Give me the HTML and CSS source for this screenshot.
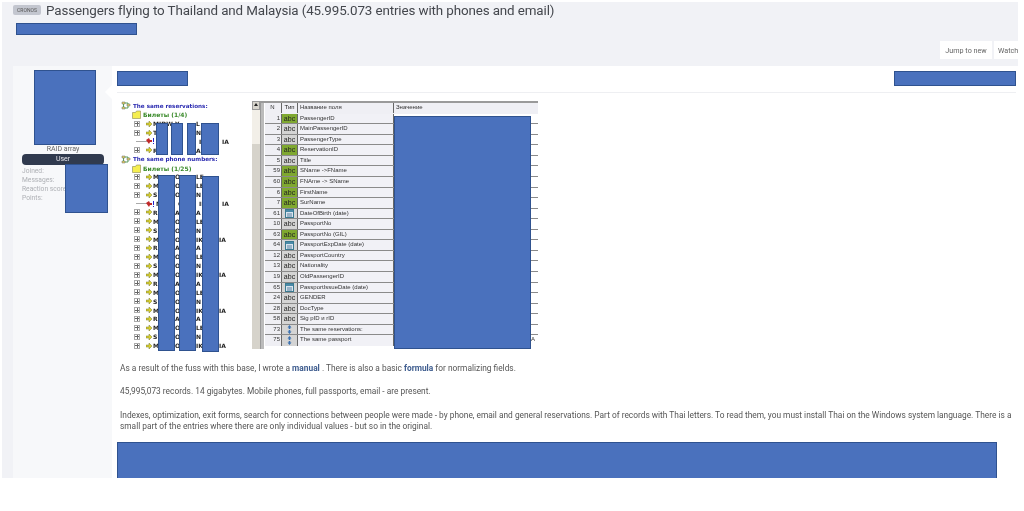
FILE: index.html
```html
<!DOCTYPE html>
<html lang="en">
<head>
<meta charset="utf-8">
<title>Passengers flying to Thailand and Malaysia</title>
<link rel="stylesheet" href="styles.css">
</head>
<body>
<svg class="defs" width="0" height="0" aria-hidden="true">
  <symbol id="i-tree" viewBox="0 0 10 9"><path d="M1 1h3v2H1zM6 3h3v2H6zM1 6h3v2H1z" fill="#e8d860" stroke="#667" stroke-width=".5"/><path d="M2.500 3v3M4 2h3v1M4 7h3V5" fill="none" stroke="#3a8a3a" stroke-width=".8"/></symbol>
  <symbol id="i-folder" viewBox="0 0 9 9"><path d="M.5 2.500h3l1-1.500h4v7.500h-8z" fill="#f5ee50" stroke="#8a8a50" stroke-width=".6"/></symbol>
  <symbol id="i-arrow" viewBox="0 0 6 6"><path d="M0 2h3V0l3 3-3 3V4H0z" fill="#d8d030" stroke="#7a7a30" stroke-width=".5"/></symbol>
  <symbol id="i-warn" viewBox="0 0 9 6"><path d="M0 2l3-2 1 2h2v2H4L3 6z" fill="#c02828"/><path d="M7.500 0v4M7.500 5v1" stroke="#2222cc" stroke-width="1"/></symbol>
  <symbol id="i-cal" viewBox="0 0 9 9"><rect x=".5" y=".5" width="8" height="8" fill="#d8e4ee" stroke="#3a7a90"/><rect x="1" y="1" width="7" height="2" fill="#4a8aa8"/><path d="M2 5h5M2 7h5" stroke="#5a80a0"/></symbol>
  <symbol id="i-link" viewBox="0 0 9 9"><path d="M4.500 0l2 2.500H5.300v1.500H3.700V2.500H2.500zM4.500 9l-2-2.500h1.200V5h1.600v1.500h1.200z" fill="#3a70b0"/></symbol>
</svg>
<div class="page">
  <header class="thread-head">
    <h1 class="title"><span class="prefix">CRONOS</span>Passengers flying to Thailand and Malaysia (45.995.073 entries with phones and email)</h1>
    <div class="redact author-bar"></div>
  </header>
  <nav class="actions">
    <a class="btn">Jump to new</a>
    <a class="btn btn-cut">Watch</a>
  </nav>
  <article class="post">
    <aside class="user">
      <div class="redact avatar"></div>
      <div class="user-name">RAID array</div>
      <div class="user-badge">User</div>
      <dl class="user-stats">
        <dt>Joined:</dt>
        <dt>Messages:</dt>
        <dt>Reaction score:</dt>
        <dt>Points:</dt>
      </dl>
      <div class="redact stats-cover"></div>
    </aside>
    <div class="body">
      <div class="notch"></div>
      <div class="post-head">
        <div class="redact date"></div>
        <div class="redact post-no"></div>
      </div>
      <div class="shot">
        <div class="tree">
          <div class="node head"><svg class="ic-tree"><use href="#i-tree"/></svg>The same reservations:</div>
          <div class="node sub"><svg class="ic-folder"><use href="#i-folder"/></svg>Билеты (1/4)</div>
          <div class="node leaf"><i class="exp"></i><svg class="ic-arrow"><use href="#i-arrow"/></svg><b>MIDW</b><b>Y</b><b>L</b><b></b></div>
          <div class="node leaf"><i class="exp"></i><svg class="ic-arrow"><use href="#i-arrow"/></svg><b>T</b><b>I</b><b>N</b><b></b></div>
          <div class="node leaf warn"><i class="dash"></i><svg class="ic-warn"><use href="#i-warn"/></svg><b>M</b><b>Y</b><b>IK</b><b>IA</b></div>
          <div class="node leaf"><i class="exp"></i><svg class="ic-arrow"><use href="#i-arrow"/></svg><b>R</b><b>A</b><b>A</b><b></b></div>
          <div class="node head"><svg class="ic-tree"><use href="#i-tree"/></svg>The same phone numbers:</div>
          <div class="node sub"><svg class="ic-folder"><use href="#i-folder"/></svg>Билеты (1/25)</div>
          <div class="node leaf"><i class="exp"></i><svg class="ic-arrow"><use href="#i-arrow"/></svg><b>M</b><b>O</b><b>LE</b><b></b></div>
          <div class="node leaf"><i class="exp"></i><svg class="ic-arrow"><use href="#i-arrow"/></svg><b>M</b><b>O</b><b>LE</b><b></b></div>
          <div class="node leaf"><i class="exp"></i><svg class="ic-arrow"><use href="#i-arrow"/></svg><b>S</b><b>O</b><b>N</b><b></b></div>
          <div class="node leaf warn"><i class="dash"></i><svg class="ic-warn"><use href="#i-warn"/></svg><b>M</b><b>O</b><b>IK</b><b>IA</b></div>
          <div class="node leaf"><i class="exp"></i><svg class="ic-arrow"><use href="#i-arrow"/></svg><b>R</b><b>A</b><b>A</b><b></b></div>
          <div class="node leaf"><i class="exp"></i><svg class="ic-arrow"><use href="#i-arrow"/></svg><b>M</b><b>O</b><b>LE</b><b></b></div>
          <div class="node leaf"><i class="exp"></i><svg class="ic-arrow"><use href="#i-arrow"/></svg><b>S</b><b>O</b><b>N</b><b></b></div>
          <div class="node leaf"><i class="exp"></i><svg class="ic-arrow"><use href="#i-arrow"/></svg><b>M</b><b>O</b><b>IK</b><b>IA</b></div>
          <div class="node leaf"><i class="exp"></i><svg class="ic-arrow"><use href="#i-arrow"/></svg><b>R</b><b>A</b><b>A</b><b></b></div>
          <div class="node leaf"><i class="exp"></i><svg class="ic-arrow"><use href="#i-arrow"/></svg><b>M</b><b>O</b><b>LE</b><b></b></div>
          <div class="node leaf"><i class="exp"></i><svg class="ic-arrow"><use href="#i-arrow"/></svg><b>S</b><b>O</b><b>N</b><b></b></div>
          <div class="node leaf"><i class="exp"></i><svg class="ic-arrow"><use href="#i-arrow"/></svg><b>M</b><b>O</b><b>IK</b><b>IA</b></div>
          <div class="node leaf"><i class="exp"></i><svg class="ic-arrow"><use href="#i-arrow"/></svg><b>R</b><b>A</b><b>A</b><b></b></div>
          <div class="node leaf"><i class="exp"></i><svg class="ic-arrow"><use href="#i-arrow"/></svg><b>M</b><b>O</b><b>LE</b><b></b></div>
          <div class="node leaf"><i class="exp"></i><svg class="ic-arrow"><use href="#i-arrow"/></svg><b>S</b><b>O</b><b>N</b><b></b></div>
          <div class="node leaf"><i class="exp"></i><svg class="ic-arrow"><use href="#i-arrow"/></svg><b>M</b><b>O</b><b>IK</b><b>IA</b></div>
          <div class="node leaf"><i class="exp"></i><svg class="ic-arrow"><use href="#i-arrow"/></svg><b>R</b><b>A</b><b>A</b><b></b></div>
          <div class="node leaf"><i class="exp"></i><svg class="ic-arrow"><use href="#i-arrow"/></svg><b>M</b><b>O</b><b>LE</b><b></b></div>
          <div class="node leaf"><i class="exp"></i><svg class="ic-arrow"><use href="#i-arrow"/></svg><b>S</b><b>O</b><b>N</b><b></b></div>
          <div class="node leaf"><i class="exp"></i><svg class="ic-arrow"><use href="#i-arrow"/></svg><b>M</b><b>O</b><b>IK</b><b>IA</b></div>
          <div class="redact r1a"></div><div class="redact r1b"></div><div class="redact r1c"></div><div class="redact r1d"></div>
          <div class="redact r2a"></div><div class="redact r2b"></div><div class="redact r2c"></div>
        </div>
        <div class="scrollbar"><span class="scroll-up"></span></div>
        <div class="grid">
          <div class="row hdr"><span class="n">N</span><span class="t">Тип</span><span class="f">Название поля</span><span class="v">Значение</span></div>
          <div class="row"><span class="n">1</span><span class="t g">abc</span><span class="f">PassengerID</span><span class="v"></span></div>
          <div class="row"><span class="n">2</span><span class="t">abc</span><span class="f">MainPassengerID</span><span class="v"></span></div>
          <div class="row"><span class="n">3</span><span class="t">abc</span><span class="f">PassengerType</span><span class="v"></span></div>
          <div class="row"><span class="n">4</span><span class="t g">abc</span><span class="f">ReservationID</span><span class="v"></span></div>
          <div class="row"><span class="n">5</span><span class="t">abc</span><span class="f">Title</span><span class="v"></span></div>
          <div class="row"><span class="n">59</span><span class="t g">abc</span><span class="f">SName -&gt;FName</span><span class="v"></span></div>
          <div class="row"><span class="n">60</span><span class="t g">abc</span><span class="f">FNAme -&gt; SName</span><span class="v"></span></div>
          <div class="row"><span class="n">6</span><span class="t g">abc</span><span class="f">FirstName</span><span class="v"></span></div>
          <div class="row"><span class="n">7</span><span class="t g">abc</span><span class="f">SurName</span><span class="v"></span></div>
          <div class="row"><span class="n">61</span><span class="t"><svg class="ic-cell"><use href="#i-cal"/></svg></span><span class="f">DateOfBirth (date)</span><span class="v"></span></div>
          <div class="row"><span class="n">10</span><span class="t">abc</span><span class="f">PassportNo</span><span class="v"></span></div>
          <div class="row"><span class="n">63</span><span class="t g">abc</span><span class="f">PassportNo (GIL)</span><span class="v"></span></div>
          <div class="row"><span class="n">64</span><span class="t"><svg class="ic-cell"><use href="#i-cal"/></svg></span><span class="f">PassportExpDate (date)</span><span class="v"></span></div>
          <div class="row"><span class="n">12</span><span class="t">abc</span><span class="f">PassportCountry</span><span class="v"></span></div>
          <div class="row"><span class="n">13</span><span class="t">abc</span><span class="f">Nationality</span><span class="v"></span></div>
          <div class="row"><span class="n">19</span><span class="t">abc</span><span class="f">OldPassengerID</span><span class="v"></span></div>
          <div class="row"><span class="n">65</span><span class="t"><svg class="ic-cell"><use href="#i-cal"/></svg></span><span class="f">PassportIssueDate (date)</span><span class="v"></span></div>
          <div class="row"><span class="n">24</span><span class="t">abc</span><span class="f">GENDER</span><span class="v"></span></div>
          <div class="row"><span class="n">28</span><span class="t">abc</span><span class="f">DocType</span><span class="v"></span></div>
          <div class="row"><span class="n">58</span><span class="t">abc</span><span class="f">Sig pID и rID</span><span class="v"></span></div>
          <div class="row"><span class="n">73</span><span class="t"><svg class="ic-cell"><use href="#i-link"/></svg></span><span class="f">The same reservations:</span><span class="v"></span></div>
          <div class="row last"><span class="n">75</span><span class="t"><svg class="ic-cell"><use href="#i-link"/></svg></span><span class="f">The same passport</span><span class="v end">A</span></div>
          <div class="redact grid-cover"></div>
        </div>
      </div>
      <div class="text">
        <p>As a result of the fuss with this base, I wrote a <a>manual</a> . There is also a basic <a>formula</a> for normalizing fields.</p>
        <p>45,995,073 records. 14 gigabytes. Mobile phones, full passports, email - are present.</p>
        <p>Indexes, optimization, exit forms, search for connections between people were made - by phone, email and general reservations. Part of records with Thai letters. To read them, you must install Thai on the Windows system language. There is a small part of the entries where there are only individual values - but so in the original.</p>
      </div>
      <div class="redact footer-block"></div>
    </div>
  </article>
</div>
</body>
</html>
```
FILE: styles.css
```css
* { box-sizing: border-box; }
html, body { margin: 0; padding: 0; background: #fff; }
body { font-family: Roboto, "Liberation Sans", sans-serif; color: #555; overflow: hidden; }
.defs { position: absolute; }

.page {
  margin: 2px 6px 0 2px;
  height: 476px;
  background: #f1f2f6;
  overflow: hidden;
  filter: blur(0.35px);
}

.redact { background: #4a71bd; border: 1px solid #2f528f; }

.thread-head { height: 39px; padding-left: 11px; position: relative; }
.title {
  margin: 0;
  display: flex;
  align-items: center;
  height: 16px;
  font-size: 13.400px;
  letter-spacing: -0.120px;
  font-weight: 400;
  color: #44474d;
  white-space: nowrap;
}
.prefix {
  width: 28px;
  height: 10px;
  margin-right: 5px;
  background: #c3c6cf;
  border-radius: 2px;
  font-size: 5px;
  letter-spacing: 0;
  line-height: 10px;
  text-align: center;
  color: #555;
}
.author-bar { width: 121px; height: 12px; margin: 5px 0 0 3px; }

.actions { display: flex; justify-content: flex-end; gap: 2px; height: 18px; margin-bottom: 7px; }
.btn {
  display: flex; align-items: center; justify-content: center;
  width: 52px;
  background: #fff;
  font-size: 7.200px;
  color: #666;
}
.btn-cut { width: 24px; justify-content: flex-start; padding-left: 4px; }

.post { display: flex; height: 412px; margin-left: 11px; }
.user { position: relative; width: 99px; padding: 4px 8px 0 9px; background: #f7f8fa; }
.avatar { width: 62px; height: 75px; margin-left: 12px; }
.user-name { height: 8px; font-size: 7px; line-height: 8px; text-align: center; color: #666; }
.user-badge {
  height: 11px; margin-top: 1px;
  background: #303a4e; border-radius: 4px;
  font-size: 7px; line-height: 11px; text-align: center; color: #e8e8ee;
}
.user-stats { margin: 2px 0 0; }
.user-stats dt { height: 9px; font-size: 6.700px; line-height: 9px; color: #aeb0b5; white-space: nowrap; }
.stats-cover { position: absolute; left: 52px; top: 98px; width: 43px; height: 49px; }

.body { position: relative; flex: 1; min-width: 0; background: #fff; padding: 0 2px 0 5px; }
.notch {
  position: absolute; left: -7px; top: 19px;
  width: 0; height: 0;
  border-style: solid; border-width: 7px 7px 7px 0;
  border-color: transparent #fff transparent transparent;
}
.post-head {
  display: flex; justify-content: space-between; align-items: flex-start;
  height: 27px; padding-top: 5px;
  border-bottom: 1px solid #eeeff2;
}
.date { width: 71px; height: 15px; }
.post-no { width: 122px; height: 15px; }

.shot { display: flex; height: 249px; margin-top: 7px; }

.tree { position: relative; width: 135px; padding-top: 1.500px; font-family: "DejaVu Sans", sans-serif; font-size: 6px; }
.node { display: flex; align-items: center; height: 8.890px; white-space: nowrap; }
.head { padding-left: 4px; font-size: 5.650px; font-weight: 700; color: #2a2ab0; }
.sub { padding-left: 15px; font-weight: 700; color: #3a8a2a; }
.leaf { padding-left: 17px; color: #222; }
.leaf b { font-size: 6px; }
.leaf b:nth-of-type(1) { width: 22px; margin-left: 1px; }
.leaf b:nth-of-type(2) { width: 21px; }
.leaf b:nth-of-type(3) { width: 23px; }
.ic-tree { width: 10px; height: 9px; margin-right: 2px; }
.ic-folder { width: 9px; height: 9px; margin-right: 2px; }
.ic-arrow { width: 6px; height: 6px; }
.ic-warn { width: 9px; height: 6px; margin-left: -2px; }
.exp { position: relative; width: 6px; height: 6px; margin-right: 6px; border: 1px solid #aaa; background: #fff; }
.exp::after { content: ""; position: absolute; left: 0; top: 1px; width: 4px; height: 2px; background: linear-gradient(#666,#666) center/4px 1px no-repeat; }
.exp::before { content: ""; position: absolute; left: 1px; top: 0; width: 2px; height: 4px; background: linear-gradient(#666,#666) center/1px 4px no-repeat; }
.dash { width: 12px; height: 1px; background: #aaa; margin-left: 2px; }

.tree .redact { position: absolute; }
.r1a { left: 39px; top: 23px; width: 12px; height: 32px; }
.r1b { left: 54px; top: 23px; width: 12px; height: 32px; }
.r1c { left: 70px; top: 23px; width: 9px; height: 32px; }
.r1d { left: 84px; top: 23px; width: 18px; height: 32px; }
.r2a { left: 41px; top: 75px; width: 17px; height: 176px; }
.r2b { left: 62px; top: 75px; width: 17px; height: 176px; }
.r2c { left: 85px; top: 76px; width: 17px; height: 176px; }

.scrollbar {
  width: 9px; height: 248px; margin-top: 1px;
  background: linear-gradient(#f2efe8 0 43px, #d6d3cb 43px);
  border-right: 1px solid #999;
}
.scroll-up { position: relative; display: block; height: 9px; background: #d8d5cd; border: 1px solid #999; }
.scroll-up::after {
  content: ""; position: absolute; left: 1px; top: 1px; width: 0; height: 0;
  border-style: solid; border-width: 0 2.500px 3px; border-color: transparent transparent #222;
}

.grid {
  position: relative;
  width: 277px;
  height: 248px;
  margin-top: 1px;
  padding-left: 4px;
  border-top: 2px solid #9a9a9a;
  background: linear-gradient(#bbb,#bbb) left/3px 100% no-repeat;
  font-family: "Liberation Sans", sans-serif;
  font-size: 6px;
  color: #333;
}
.row {
  display: grid;
  grid-template-columns: 17px 16px 96px 1fr;
  height: 10.570px;
  padding-bottom: 1px;
  background: #8a8a8a;
  line-height: 9.500px;
  white-space: nowrap;
}
.n { background: #efeff4; text-align: right; padding-right: 1px; border-right: 1px solid #666; }
.t { display: flex; align-items: center; justify-content: center; background: #d4d4d4; border-right: 1px solid #666; font-size: 7px; color: #222; }
.t.g { background: #7fa830; }
.hdr .t { font-size: 6px; }
.f { background: #f1f1f6; padding-left: 2px; border-right: 1px solid #666; }
.v { background: #fff; padding-left: 2px; }
.end { text-align: right; padding-right: 3px; }
.hdr { background: #efeff4; }
.hdr > span { background: #efeff4; }
.hdr .n { text-align: center; }
.last { padding-bottom: 0; }
.ic-cell { width: 9px; height: 9px; }
.grid-cover { position: absolute; left: 133px; top: 13px; width: 137px; height: 233px; }

.text { margin-top: 14px; padding-left: 3px; font-size: 8.350px; line-height: 11.700px; color: #555; }
.text p { margin: 0 0 11.700px; }
.text a { font-weight: 700; color: #3f5d8f; }
.footer-block { width: 880px; height: 37px; margin-top: -3px; }
```
